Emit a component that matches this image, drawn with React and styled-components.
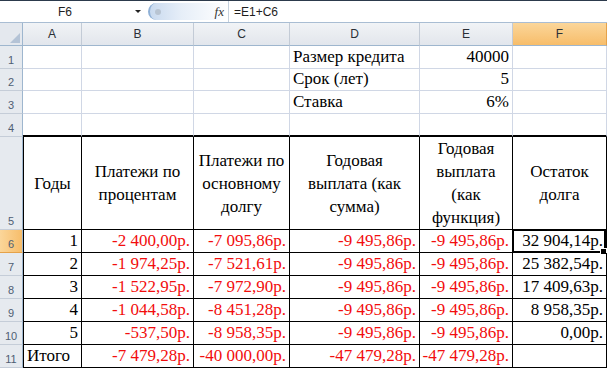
import React from 'react';
import styled, { createGlobalStyle } from 'styled-components';

const SERIF = '"Liberation Serif", "Times New Roman", serif';
const SANS = '"Liberation Sans", "Noto Sans", Arial, sans-serif';

const Global = createGlobalStyle`
  html, body { margin: 0; padding: 0; background: #fff; overflow: hidden; }
  body { width: 607px; height: 370px; font-family: ${SERIF}; }
`;

const Frame = styled.div`
  width: 607px;
  height: 370px;
  overflow: hidden;
  background: #fff;
`;

const FormulaBar = styled.div`
  display: flex;
  align-items: stretch;
  height: 23px;
  box-sizing: border-box;
  border-top: 1px solid #2c3a4c;
  border-bottom: 1px solid #a9bdd3;
  background: #fff;
  font-family: ${SANS};
  font-size: 12px;
  color: #1e1e1e;
`;

const NameBox = styled.div`
  width: 130px;
  display: flex;
  align-items: center;
  justify-content: center;
`;

const DropArrow = styled.div`
  width: 16px;
  display: flex;
  align-items: center;
  justify-content: center;
  &::after {
    content: "";
    border-left: 3px solid transparent;
    border-right: 3px solid transparent;
    border-top: 3px solid #222;
  }
`;

const FxPill = styled.div`
  margin: 2px 0 2px 2px;
  width: 80px;
  display: flex;
  align-items: center;
  justify-content: space-between;
  border-radius: 10px 0 0 10px;
  border-left: 2px solid #8fb0d6;
  background: linear-gradient(to right, #c9daef, #e6eef8 40%, #ffffff);
  padding: 0 4px 0 5px;
  box-sizing: border-box;
`;

const Knob = styled.span`
  width: 6px;
  height: 6px;
  border-radius: 50%;
  background: #b8c4d2;
`;

const Fx = styled.span`
  font-family: ${SERIF};
  font-style: italic;
  font-size: 13px;
  color: #333;
`;

const FormulaInput = styled.div`
  flex: 1;
  display: flex;
  align-items: center;
  padding-left: 5px;
  border-left: 1px solid #c5d1de;
`;

const Sheet = styled.div`
  display: grid;
  grid-template-columns: 23px 59px 112px 96px 130px 93px 94px;
  grid-template-rows: 23px 23px 22px 23px 23px 93px repeat(6, 23px);
`;

const Corner = styled.div`
  background: #e4e8ee;
  border-right: 1px solid #9eb6ce;
  border-bottom: 1px solid #9eb6ce;
  display: flex;
  align-items: flex-end;
  justify-content: flex-end;
  padding: 0 2px 2px 0;
`;

const ColHead = styled.div`
  box-sizing: border-box;
  display: flex;
  align-items: center;
  justify-content: center;
  font-family: ${SANS};
  font-size: 12px;
  color: #2a2f36;
  background: ${p => p.$active
    ? 'linear-gradient(#fbd69a, #f7bd6a)'
    : 'linear-gradient(#f1f3f6, #e2e6ec)'};
  border-right: 1px solid ${p => p.$active ? '#e5a24a' : '#c3cbd6'};
  border-bottom: 1px solid #9eb6ce;
`;

const RowHead = styled.div`
  box-sizing: border-box;
  display: flex;
  align-items: flex-end;
  justify-content: center;
  padding-bottom: 2px;
  font-family: ${SANS};
  font-size: 11px;
  color: #4f5e73;
  background: ${p => p.$active ? 'linear-gradient(to right, #fbd69a, #f7bd6a)' : '#e6eaef'};
  border-right: 1px solid #9eb6ce;
  border-bottom: 1px solid ${p => p.$active ? '#e5a24a' : '#c5cdd8'};
`;

const Cell = styled.div`
  position: relative;
  box-sizing: border-box;
  display: flex;
  align-items: ${p => p.$head ? 'center' : 'flex-end'};
  justify-content: ${p => p.$align === 'right' ? 'flex-end' : p.$align === 'center' ? 'center' : 'flex-start'};
  text-align: ${p => p.$align || 'left'};
  padding: ${p => p.$head ? '0 2px' : '0 3px 1px 3px'};
  font-family: ${SERIF};
  font-size: 17px;
  line-height: ${p => p.$head ? '23px' : '20px'};
  white-space: nowrap;
  color: ${p => p.$red ? '#f20d0d' : '#000'};
  border-right: 1px solid ${p => p.$box ? '#000' : '#d0d7e5'};
  border-bottom: ${p => p.$topOfTable ? '2px solid #000' : `1px solid ${p.$box ? '#000' : '#d0d7e5'}`};
  border-left: ${p => p.$first ? '1px solid #000' : 'none'};
`;

const Selection = styled.div`
  position: absolute;
  left: -1px;
  top: -1px;
  right: 0;
  bottom: -1px;
  border: 2px solid #000;
  pointer-events: none;
`;

const FillHandle = styled.div`
  position: absolute;
  right: -3px;
  bottom: -4px;
  width: 5px;
  height: 5px;
  background: #000;
  border: 1px solid #fff;
`;

const cols = ['A', 'B', 'C', 'D', 'E', 'F'];

const headerTexts = [
  ['Годы'],
  ['Платежи по', 'процентам'],
  ['Платежи по', 'основному', 'долгу'],
  ['Годовая', 'выплата (как', 'сумма)'],
  ['Годовая', 'выплата', '(как', 'функция)'],
  ['Остаток', 'долга'],
];

const data = [
  ['1', '-2 400,00р.', '-7 095,86р.', '-9 495,86р.', '-9 495,86р.', '32 904,14р.'],
  ['2', '-1 974,25р.', '-7 521,61р.', '-9 495,86р.', '-9 495,86р.', '25 382,54р.'],
  ['3', '-1 522,95р.', '-7 972,90р.', '-9 495,86р.', '-9 495,86р.', '17 409,63р.'],
  ['4', '-1 044,58р.', '-8 451,28р.', '-9 495,86р.', '-9 495,86р.', '8 958,35р.'],
  ['5', '-537,50р.', '-8 958,35р.', '-9 495,86р.', '-9 495,86р.', '0,00р.'],
  ['Итого', '-7 479,28р.', '-40 000,00р.', '-47 479,28р.', '-47 479,28р.', ''],
];

const params = [
  ['Размер кредита', '40000'],
  ['Срок (лет)', '5'],
  ['Ставка', '6%'],
];

export default function App() {
  return (
    <Frame>
      <Global />
      <FormulaBar>
        <NameBox>F6</NameBox>
        <DropArrow />
        <FxPill>
          <Knob />
          <Fx>fx</Fx>
        </FxPill>
        <FormulaInput>=E1+C6</FormulaInput>
      </FormulaBar>
      <Sheet>
        <Corner>
          <svg width="10" height="10" viewBox="0 0 10 10">
            <polygon points="10,0 10,10 0,10" fill="#b4c3d6" />
          </svg>
        </Corner>
        {cols.map(c => (
          <ColHead key={c} $active={c === 'F'}>{c}</ColHead>
        ))}

        {[0, 1, 2, 3].map(r => (
          <React.Fragment key={'r' + r}>
            <RowHead>{r + 1}</RowHead>
            {cols.map((c, ci) => {
              const p = params[r];
              let text = '';
              let align = 'left';
              if (p && ci === 3) text = p[0];
              if (p && ci === 4) { text = p[1]; align = 'right'; }
              return (
                <Cell key={c} $align={align} $topOfTable={r === 3}>{text}</Cell>
              );
            })}
          </React.Fragment>
        ))}

        <RowHead>5</RowHead>
        {headerTexts.map((lines, ci) => (
          <Cell key={'h' + ci} $head $box $first={ci === 0} $align="center">
            <div>
              {lines.map((l, i) => (<React.Fragment key={i}>{i > 0 && <br />}{l}</React.Fragment>))}
            </div>
          </Cell>
        ))}

        {data.map((row, ri) => (
          <React.Fragment key={'d' + ri}>
            <RowHead $active={ri === 0}>{ri + 6}</RowHead>
            {row.map((v, ci) => (
              <Cell
                key={ci}
                $box
                $first={ci === 0}
                $align={ci === 0 && ri === 5 ? 'left' : 'right'}
                $red={ci >= 1 && ci <= 4}
              >
                {v}
                {ri === 0 && ci === 5 && (
                  <Selection>
                    <FillHandle />
                  </Selection>
                )}
              </Cell>
            ))}
          </React.Fragment>
        ))}
      </Sheet>
    </Frame>
  );
}
